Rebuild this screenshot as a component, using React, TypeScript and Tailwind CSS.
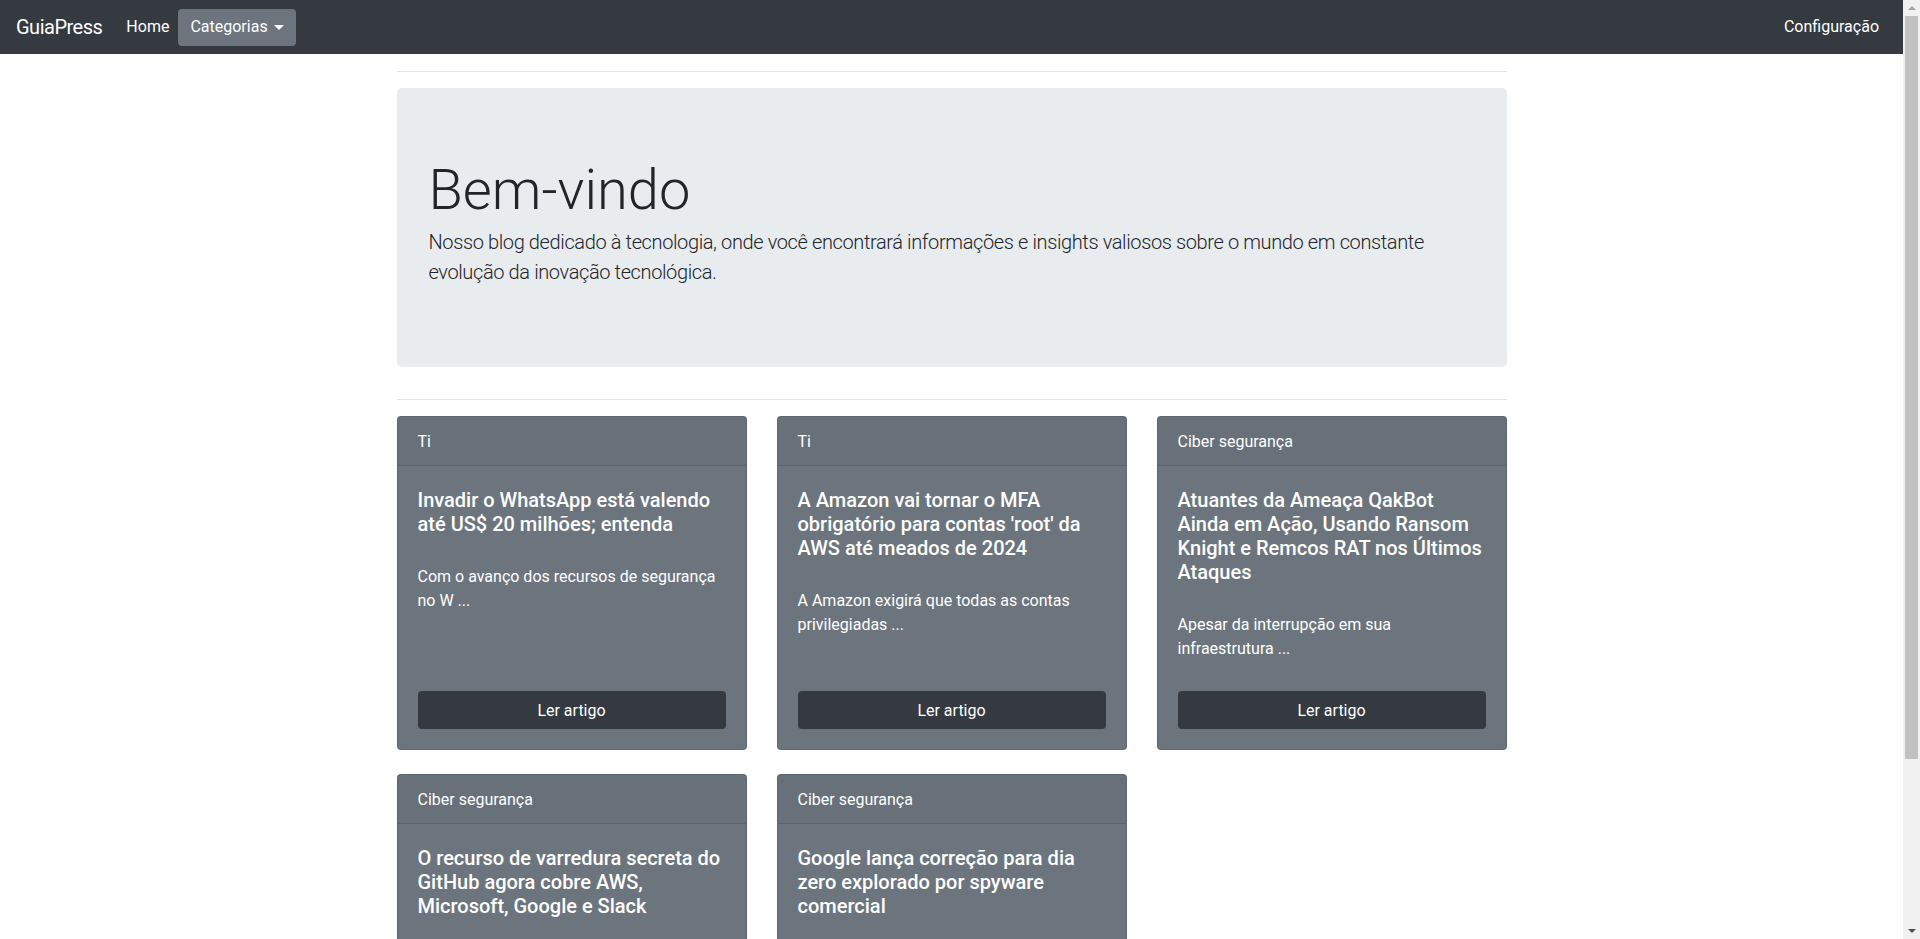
import React from 'react';

type Post = {
  category: string;
  title: string;
  excerpt: string;
};

const posts: Post[] = [
  {
    category: 'Ti',
    title: 'Invadir o WhatsApp está valendo até US$ 20 milhões; entenda',
    excerpt: 'Com o avanço dos recursos de segurança no W ...',
  },
  {
    category: 'Ti',
    title: "A Amazon vai tornar o MFA obrigatório para contas 'root' da AWS até meados de 2024",
    excerpt: 'A Amazon exigirá que todas as contas privilegiadas ...',
  },
  {
    category: 'Ciber segurança',
    title: 'Atuantes da Ameaça QakBot Ainda em Ação, Usando Ransom Knight e Remcos RAT nos Últimos Ataques',
    excerpt: 'Apesar da interrupção em sua infraestrutura ...',
  },
  {
    category: 'Ciber segurança',
    title: 'O recurso de varredura secreta do GitHub agora cobre AWS, Microsoft, Google e Slack',
    excerpt: 'O GitHub anunciou que o recurso de varredura ...',
  },
  {
    category: 'Ciber segurança',
    title: 'Google lança correção para dia zero explorado por spyware comercial',
    excerpt: 'O Google lançou atualizações de segurança ...',
  },
];

const PostCard = ({ post }: { post: Post }) => (
  <div className="flex flex-col rounded-[4px] border border-[rgba(0,0,0,0.125)] bg-[#6c757d] text-white">
    <div className="border-b border-[rgba(0,0,0,0.125)] bg-[rgba(0,0,0,0.03)] px-5 pt-[13px] pb-[11px] text-[16px] leading-6">
      {post.category}
    </div>
    <div className="flex flex-1 flex-col p-5">
      <h5 className="mt-[2px] mb-[10px] text-[20px] font-medium leading-6">{post.title}</h5>
      <p className="mt-[19px] mb-[30px] text-[16px] leading-6">{post.excerpt}</p>
      <button className="mt-auto h-[38px] w-full rounded-[4px] bg-[#343a40] pt-[1px] text-[16px] text-white">
        Ler artigo
      </button>
    </div>
  </div>
);

const FakeScrollbar = () => (
  <div className="flex h-screen w-[17px] shrink-0 flex-col items-center bg-[#f1f1f1]">
    <div className="flex h-[16px] items-center justify-center">
      <div className="h-0 w-0 border-x-[4px] border-b-[4px] border-x-transparent border-b-[#a3a3a3]" />
    </div>
    <div className="h-[743px] w-[13px] bg-[#c1c1c1]" />
    <div className="flex-1" />
    <div className="flex h-[16px] items-center justify-center">
      <div className="h-0 w-0 border-x-[4px] border-t-[4px] border-x-transparent border-t-[#505050]" />
    </div>
  </div>
);

export default function App() {
  return (
    <div className="flex h-screen w-full overflow-hidden bg-white font-['Roboto',sans-serif] text-[#212529]">
      <div className="min-w-0 flex-1 overflow-hidden">
        <nav className="flex h-[54px] items-center bg-[#343a40] px-4 text-white">
          <span className="mr-4 text-[20px] leading-[30px] tracking-[-0.5px]">GuiaPress</span>
          <span className="px-2 text-[16px] leading-6">Home</span>
          <button className="ml-[1px] flex h-[37px] items-center rounded-[4px] bg-[#6c757d] px-3 text-[16px] text-white">
            Categorias
            <span className="ml-[6px] h-0 w-0 border-x-[5px] border-t-[5px] border-x-transparent border-t-white" />
          </button>
          <span className="ml-auto px-2 text-[16px] leading-6">Configuração</span>
        </nav>

        <main className="mx-auto w-[1110px]">
          <hr className="mt-[17px] mb-4 border-t border-[rgba(0,0,0,0.1)]" />

          <section className="rounded-[5px] bg-[#e9ecef] px-8 py-16">
            <h1 className="mt-[5px] mb-[3px] text-[56px] font-light leading-[1.2]">Bem-vindo</h1>
            <p className="mb-4 text-[20px] font-light leading-[30px] tracking-[-0.38px]">
              Nosso blog dedicado à tecnologia, onde você encontrará informações e insights valiosos sobre o mundo em constante
              <br />
              evolução da inovação tecnológica.
            </p>
          </section>

          <hr className="mt-8 mb-4 border-t border-[rgba(0,0,0,0.1)]" />

          <div className="grid grid-cols-3 gap-x-[30px] gap-y-6 pb-8">
            {posts.map((post, i) => (
              <PostCard key={i} post={post} />
            ))}
          </div>
        </main>
      </div>
      <FakeScrollbar />
    </div>
  );
}
